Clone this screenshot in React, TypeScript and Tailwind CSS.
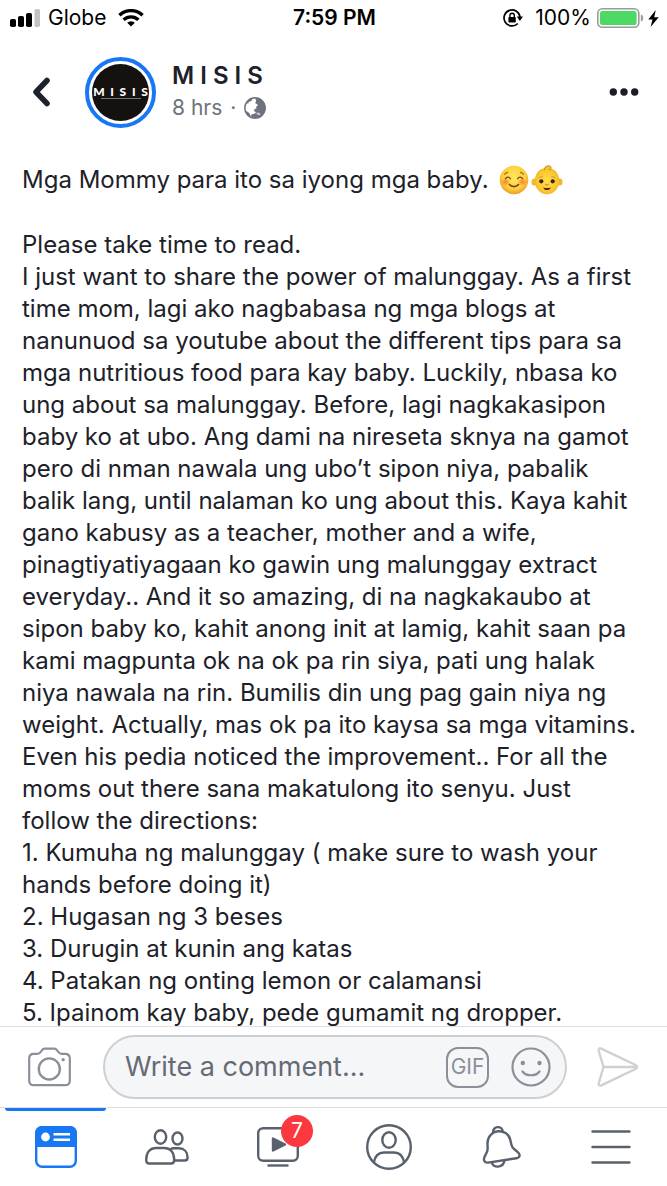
import React from 'react';

const POST_INTRO = 'Mga Mommy para ito sa iyong mga baby.';

const POST_LINES = [
  'Please take time to read.',
  'I just want to share the power of malunggay. As a first',
  'time mom, lagi ako nagbabasa ng mga blogs at',
  'nanunuod sa youtube about the different tips para sa',
  'mga nutritious food para kay baby. Luckily, nbasa ko',
  'ung about sa malunggay. Before, lagi nagkakasipon',
  'baby ko at ubo. Ang dami na nireseta sknya na gamot',
  'pero di nman nawala ung ubo’t sipon niya, pabalik',
  'balik lang, until nalaman ko ung about this. Kaya kahit',
  'gano kabusy as a teacher, mother and a wife,',
  'pinagtiyatiyagaan ko gawin ung malunggay extract',
  'everyday.. And it so amazing, di na nagkakaubo at',
  'sipon baby ko, kahit anong init at lamig, kahit saan pa',
  'kami magpunta ok na ok pa rin siya, pati ung halak',
  'niya nawala na rin. Bumilis din ung pag gain niya ng',
  'weight. Actually, mas ok pa ito kaysa sa mga vitamins.',
  'Even his pedia noticed the improvement.. For all the',
  'moms out there sana makatulong ito senyu. Just',
  'follow the directions:',
  '1. Kumuha ng malunggay ( make sure to wash your',
  'hands before doing it)',
  '2. Hugasan ng 3 beses',
  '3. Durugin at kunin ang katas',
  '4. Patakan ng onting lemon or calamansi',
  '5. Ipainom kay baby, pede gumamit ng dropper.',
];

const SignalIcon = () => (
  <svg width="30" height="18" viewBox="0 0 30 18">
    <rect x="0" y="10" width="6" height="8" rx="1.8" />
    <rect x="8" y="7" width="6" height="11" rx="1.8" />
    <rect x="16" y="4" width="6" height="14" rx="1.8" />
    <rect x="24.5" y="0" width="5.5" height="18" rx="1.8" fill="#c3c3c3" />
  </svg>
);

const WifiIcon = () => (
  <svg width="26" height="18" viewBox="0 0 26 18" fill="none" stroke="currentColor" strokeWidth="3.3">
    <path d="M1.4 6.3a16.6 16.6 0 0 1 23.2 0" />
    <path d="M5.6 10.8a10.6 10.6 0 0 1 14.8 0" />
    <path d="M13 17.6l-3.8-3.8a5.4 5.4 0 0 1 7.6 0z" fill="currentColor" stroke="none" />
  </svg>
);

const RotationLockIcon = () => (
  <svg width="20" height="18" viewBox="0 0 20 18" fill="none" stroke="currentColor">
    <path d="M14.8 14.5A8 8 0 1 1 17 8.2" strokeWidth="1.7" />
    <path d="M13.8 7.6h6.2l-3.1 4.4z" fill="currentColor" stroke="none" />
    <rect x="5.4" y="8" width="7.4" height="5.6" rx="0.8" fill="currentColor" stroke="none" />
    <path d="M6.9 8.2V6.4a2.2 2.2 0 0 1 4.4 0v1.8" strokeWidth="1.4" />
  </svg>
);

const BatteryIcon = () => (
  <svg width="47" height="20" viewBox="0 0 47 20">
    <rect x="0.8" y="0.8" width="41" height="18.4" rx="4.5" fill="none" stroke="#9b9b9b" strokeWidth="1.6" />
    <rect x="3" y="3" width="36.6" height="14" rx="2.2" fill="#4cd964" />
    <path d="M43.8 6.5c3.2.8 3.2 6.2 0 7z" fill="#9b9b9b" />
  </svg>
);

const BoltIcon = () => (
  <svg width="11" height="17" viewBox="0 0 11 17" fill="currentColor">
    <path d="M7.8 0L.3 9.4h4.2L2.6 17 10.7 7.2H6.2z" />
  </svg>
);

const GlobeIcon = () => (
  <svg width="22" height="22" viewBox="0 0 22 22">
    <circle cx="11" cy="11" r="10.2" fill="#fff" stroke="#6d737c" strokeWidth="1.4" />
    <path
      d="M11 .9c4.500 0 7.500 2 9.200 4.800 2 3.800 1.500 8.800-1.500 12.100-2.700 2.800-6.700 3.800-10.700 2.700l-1.500-2 1.500-1.200 3-.8 1-1.500-2-.7.5-2.300 2-.5-.5-1.700 1.800-1-.8-1.800-1.800-.8 1-2.500z"
      fill="#6d737c"
    />
    <path d="M12.500 15.500l2.500.3 1.800 1.200-1.500 1.200-2.500-.7z" fill="#fff" opacity="0.6" />
    <path d="M2.500 6l3-3.500 3-1.200-1 2.700-2.500.8-1 2z" fill="#6d737c" />
    <path d="M1.300 13.500l2.700 1.500 2 2 .5 3c-2.700-1.300-4.500-3.500-5.200-6.500z" fill="#6d737c" />
  </svg>
);

const SmileEmoji = () => (
  <svg width="30" height="32" viewBox="0 0 30 32" role="img" aria-label="Smiling face">
    <defs>
      <radialGradient id="smileSkin" cx="50%" cy="42%" r="60%">
        <stop offset="0%" stopColor="#ffe760" />
        <stop offset="65%" stopColor="#fdd23c" />
        <stop offset="100%" stopColor="#ec9627" />
      </radialGradient>
      <radialGradient id="smileBlush">
        <stop offset="0%" stopColor="#f7663d" stopOpacity="0.8" />
        <stop offset="100%" stopColor="#f7663d" stopOpacity="0" />
      </radialGradient>
    </defs>
    <circle cx="15" cy="16" r="14.3" fill="url(#smileSkin)" />
    <ellipse cx="6.5" cy="18" rx="5" ry="4" fill="url(#smileBlush)" />
    <ellipse cx="23.5" cy="18" rx="5" ry="4" fill="url(#smileBlush)" />
    <g fill="none" stroke="#7a431c" strokeLinecap="round" strokeWidth="1.3">
      <path d="M6.5 14.800c.8-2.200 4-2.200 4.800 0" />
      <path d="M18.700 14.800c.8-2.200 4-2.200 4.800 0" />
      <path d="M10.500 20.500c2.200 2.800 6.800 2.800 9 0" strokeWidth="1.6" />
      <path d="M5.500 10.500c.7-1.300 1.800-2 3.200-2.100M21.300 8.400c1.400.1 2.500.8 3.200 2.100" stroke="#a8641f" strokeWidth="1.1" />
    </g>
  </svg>
);

const BabyEmoji = () => (
  <svg width="32" height="32" viewBox="0 0 32 32" role="img" aria-label="Baby">
    <defs>
      <radialGradient id="babySkin" cx="50%" cy="50%" r="58%">
        <stop offset="0%" stopColor="#ffdc4a" />
        <stop offset="70%" stopColor="#fac72f" />
        <stop offset="100%" stopColor="#eba824" />
      </radialGradient>
    </defs>
    <ellipse cx="3.3" cy="18" rx="2.8" ry="3.5" fill="#f3b52a" />
    <ellipse cx="28.7" cy="18" rx="2.8" ry="3.5" fill="#f3b52a" />
    <path d="M16 4c8 0 12.200 5.800 12.200 13S23 30.300 16 30.300 3.800 24.200 3.800 17 8 4 16 4z" fill="url(#babySkin)" />
    <path d="M13.500 5.500c0-3 4-4.800 6-2.800 1.200 1.300 0 3-1.500 2.800" fill="#fac72f" stroke="#d08b20" strokeWidth="1.1" strokeLinecap="round" />
    <path d="M8 13.800c1-.9 2-1.200 3.200-1M20.800 12.800c1.200-.2 2.200.1 3.200 1" fill="none" stroke="#d3932b" strokeLinecap="round" />
    <circle cx="10.3" cy="17.3" r="2.1" fill="#3b2412" />
    <circle cx="21.7" cy="17.3" r="2.1" fill="#3b2412" />
    <path d="M14.700 20.500c.9.700 1.700.7 2.600 0" fill="none" stroke="#b86d16" strokeLinecap="round" />
    <path d="M12.200 23.500c2.400.8 5.200.8 7.600 0-.8 3.400-6.800 3.400-7.600 0z" fill="#5d2414" />
  </svg>
);

const CameraIcon = () => (
  <svg width="43" height="40" viewBox="0 0 44 40" fill="none" stroke="#8a8f99" strokeWidth="2.2" strokeLinejoin="round">
    <path d="M6 6.5h3.500c1.500 0 2.500-.6 3.300-1.700l1.400-1.900C15 1.800 15.800 1.200 17 1.200h10c1.200 0 2 .6 2.800 1.700l1.400 1.900c.8 1.100 1.800 1.700 3.300 1.700H38c3 0 4.800 1.800 4.800 4.800v22.500c0 3-1.800 4.800-4.800 4.800H6c-3 0-4.800-1.800-4.800-4.800V11.300c0-3 1.800-4.800 4.800-4.800z" />
    <circle cx="21.8" cy="22" r="10.8" strokeWidth="2.4" />
    <circle cx="36" cy="12.5" r="1.7" fill="#8a8f99" stroke="none" />
  </svg>
);

const SmileyIcon = () => (
  <svg width="40" height="40" viewBox="0 0 40 40" fill="none" stroke="#8a8f99" strokeWidth="2.2" strokeLinecap="round">
    <circle cx="20" cy="20" r="18.5" />
    <circle cx="11.8" cy="16" r="2.2" fill="#8a8f99" stroke="none" />
    <circle cx="28.5" cy="16" r="2.2" fill="#8a8f99" stroke="none" />
    <path d="M11.500 24.500c3.500 5 13.500 5 17 0" />
  </svg>
);

const SendIcon = () => (
  <svg width="42" height="40" viewBox="0 0 42 40" fill="none" stroke="#cfd0d2" strokeWidth="2.4" strokeLinejoin="round">
    <path d="M1.800 4C1.300 2 2.500.8 4.300 1.600L38.500 18c2 1 2 3 0 4L4.300 38.400c-1.800.8-3-.4-2.500-2.400L6.500 20z" />
    <path d="M6.500 20H39" />
  </svg>
);

const FeedIcon = () => (
  <svg width="42" height="42" viewBox="0 0 42 42">
    <rect x="1.2" y="1.2" width="39.6" height="39.6" rx="6" fill="#fff" stroke="#1877f2" strokeWidth="2.4" />
    <path d="M0 21V7a7 7 0 0 1 7-7h28a7 7 0 0 1 7 7v14z" fill="#1877f2" />
    <circle cx="10.5" cy="11" r="4.4" fill="#fff" />
    <path d="M18.500 8.200H35M18.500 13.800H35" stroke="#fff" strokeWidth="2.5" />
  </svg>
);

const FriendsIcon = () => (
  <svg width="44" height="36" viewBox="0 0 44 36" fill="none" stroke="#59616c" strokeWidth="2.4" strokeLinejoin="round">
    <ellipse cx="15.5" cy="8" rx="5.7" ry="6.7" />
    <ellipse cx="32.5" cy="9.5" rx="5" ry="6" />
    <path d="M1.200 31c0-8 4-12 10-12h8c6 0 10 4 10 12 0 2.500-.8 3.500-3 3.500h-22c-2.200 0-3-1-3-3.500z" />
    <path d="M25.500 20c1-.5 2-.7 3.500-.7h5c5 0 8.600 3.500 8.600 9.200 0 2-.8 3-2.800 3H29" />
  </svg>
);

const WatchIcon = () => (
  <svg width="42" height="40" viewBox="0 0 42 40" fill="none" stroke="#59616c" strokeWidth="2.4">
    <rect x="1.2" y="1.2" width="39.6" height="32.6" rx="5" />
    <path d="M16 11.500v12L28 17.500z" fill="#59616c" strokeLinejoin="round" />
    <path d="M10.500 38.500h21" />
  </svg>
);

const ProfileIcon = () => (
  <svg width="46" height="46" viewBox="0 0 46 46" fill="none" stroke="#59616c" strokeWidth="2.4">
    <circle cx="23" cy="23" r="21.8" />
    <ellipse cx="23" cy="16" rx="6.7" ry="7.7" />
    <path d="M7.800 38.500C9 32 13 28.500 18 28.500h10c5 0 9 3.500 10.200 10" />
  </svg>
);

const BellIcon = () => (
  <svg width="42" height="42" viewBox="-4 0 42 42" fill="none" stroke="#59616c" strokeWidth="2.4" strokeLinejoin="round">
    <path d="M10 6.500c.3-7 9.300-7 9.700-.9" />
    <path d="M4.500 17C4.800 10.500 9 6 14.700 5.300 20.500 4.700 26 8 27.200 13.500l1.200 5.200c.5 2 1.500 3.500 3.200 4.800l3.200 2.700c3 2.600 2 5.600-1.500 6.100L5 36.600C1.500 37.100 0 34 1.700 30.500l2.400-5c1.100-2.700.3-5.500.4-8.500z" />
    <path d="M8.800 36.200c1 6.200 11.800 6.200 12.700-2" />
  </svg>
);

const MenuIcon = () => (
  <svg width="40" height="34" viewBox="0 0 40 34" stroke="#59616c" strokeWidth="2.4" strokeLinecap="round">
    <path d="M1.500 1.500h37M1.500 17h37M1.500 32.500h37" />
  </svg>
);

const NAV_ITEMS = [
  { label: 'News Feed', icon: FeedIcon, active: true },
  { label: 'Friends', icon: FriendsIcon },
  { label: 'Watch', icon: WatchIcon, badge: 7 },
  { label: 'Profile', icon: ProfileIcon },
  { label: 'Notifications', icon: BellIcon },
  { label: 'Menu', icon: MenuIcon },
];

const StatusBar = () => (
  <div className="grid h-9 shrink-0 grid-cols-3 items-center pr-2 pl-2.5 text-[21px] leading-9 text-black">
    <div className="flex items-center">
      <SignalIcon />
      <span className="mr-3 ml-2">Globe</span>
      <WifiIcon />
    </div>
    <span className="text-center font-semibold">7:59 PM</span>
    <div className="flex items-center justify-end">
      <RotationLockIcon />
      <span className="mr-1.5 ml-3">100%</span>
      <BatteryIcon />
      <span className="ml-1">
        <BoltIcon />
      </span>
    </div>
  </div>
);

const PostHeader = () => (
  <header className="flex h-28 shrink-0 items-center px-7">
    <button aria-label="Back" className="mr-[31px] px-1">
      <svg width="18" height="30" viewBox="0 0 18 30" fill="none" stroke="#1d2129" strokeWidth="5.5" strokeLinecap="round" strokeLinejoin="round">
        <path d="M15 3.500L4 15l11 11.500" />
      </svg>
    </button>
    <div className="flex size-[71px] items-center justify-center rounded-full border-4 border-[#1877f2] p-[3px]">
      <div className="flex size-full flex-col items-center justify-center overflow-hidden rounded-full bg-[#15110f] text-white">
        <span className="font-['Lato'] text-[12px] leading-3 font-black whitespace-nowrap">M&nbsp; I&nbsp; S&nbsp; I&nbsp; S</span>
        <span className="h-px w-10 bg-neutral-500" />
      </div>
    </div>
    <div className="ml-4 flex-1">
      <h1 className="text-[24px] leading-8 font-semibold text-[#1d2129]">M I S I S</h1>
      <p className="flex items-center text-[21px] leading-8 text-[#6d737c]">
        8 hrs
        <span className="mx-2">·</span>
        <GlobeIcon />
      </p>
    </div>
    <button aria-label="More options">
      <svg width="30" height="8" viewBox="0 0 30 8" fill="#1d1c2b">
        <circle cx="4.3" cy="4" r="3.7" />
        <circle cx="15" cy="4" r="3.7" />
        <circle cx="25.7" cy="4" r="3.7" />
      </svg>
    </button>
  </header>
);

const CommentBar = () => (
  <form className="flex h-[81px] shrink-0 items-center border-t border-[#dcdfe4] px-7" onSubmit={(e) => e.preventDefault()}>
    <button type="button" aria-label="Add photo">
      <CameraIcon />
    </button>
    <div className="mr-[30px] ml-8 flex h-16 min-w-0 flex-1 items-center rounded-full border-2 border-[#ccd0d5] bg-[#f5f6f8] pr-3.5 pl-5">
      <input
        type="text"
        aria-label="Write a comment"
        placeholder="Write a comment..."
        className="min-w-0 flex-1 bg-transparent text-[27px] text-[#1d2129] outline-none placeholder:text-[#656b75]"
      />
      <button type="button" className="flex h-[41px] w-[43px] items-center justify-center rounded-xl border-2 border-[#8a8f99] text-[21px] text-[#8a8f99]">
        GIF
      </button>
      <button type="button" aria-label="Add emoji" className="ml-[22px]">
        <SmileyIcon />
      </button>
    </div>
    <button type="submit" aria-label="Send">
      <SendIcon />
    </button>
  </form>
);

const TabBar = () => (
  <nav className="grid h-[79px] shrink-0 grid-cols-6 border-t border-[#dcdfe4]">
    {NAV_ITEMS.map((item) => (
      <button key={item.label} aria-label={item.label} className="relative flex items-center justify-center">
        {item.active && <span className="absolute inset-x-[5px] top-0 h-[3px] rounded-b-sm bg-[#1877f2]" />}
        <span className="relative">
          <item.icon />
          {item.badge && (
            <span className="absolute -top-3 -right-3.5 flex size-8 items-center justify-center rounded-full bg-[#fa383e] text-[21px] text-white">
              {item.badge}
            </span>
          )}
        </span>
      </button>
    ))}
  </nav>
);

export default function App() {
  return (
    <div className="flex h-screen flex-col overflow-hidden bg-white font-['Inter',sans-serif]">
      <StatusBar />
      <PostHeader />
      <main className="min-h-0 flex-1 overflow-hidden pt-4 pl-[22px] text-[24px] leading-8 text-[#1d2129]">
        <p className="mb-[33px] flex h-8 items-center">
          <span className="mr-2.5">{POST_INTRO}</span>
          <span className="flex gap-0.5">
            <SmileEmoji />
            <BabyEmoji />
          </span>
        </p>
        <p className="whitespace-pre">{POST_LINES.join('\n')}</p>
      </main>
      <CommentBar />
      <TabBar />
    </div>
  );
}
